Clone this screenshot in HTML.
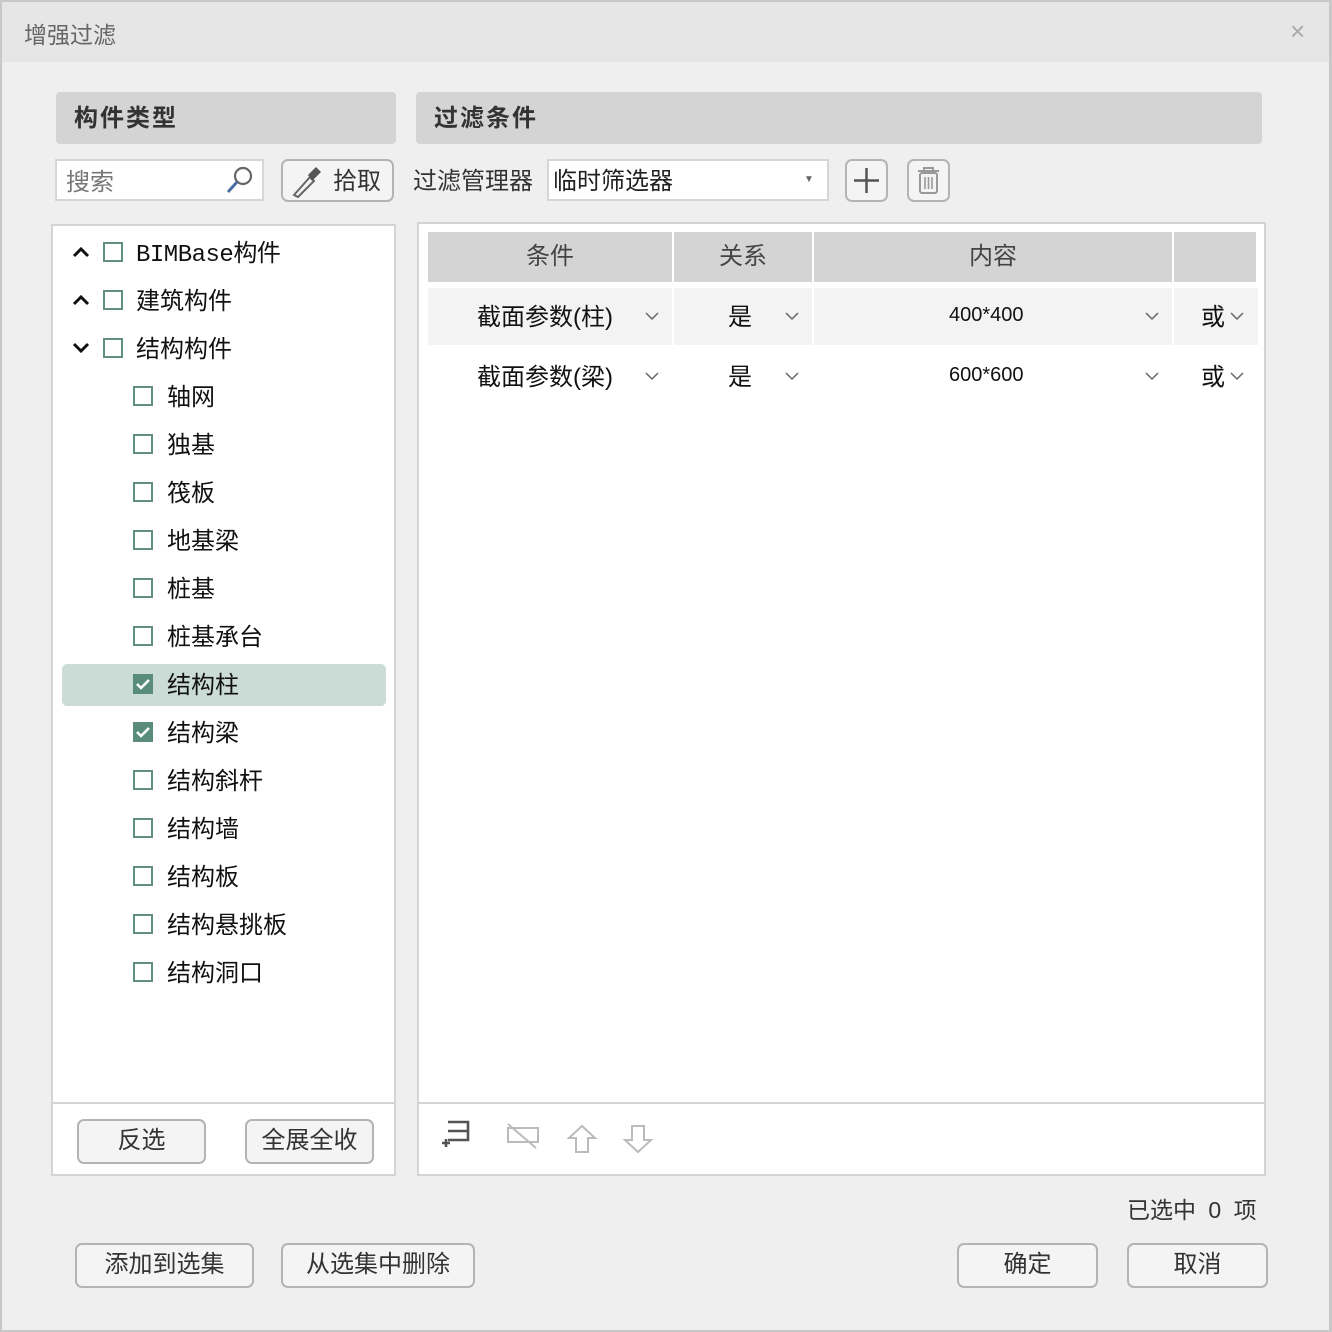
<!DOCTYPE html>
<html><head><meta charset="utf-8"><style>
*{margin:0;padding:0;box-sizing:border-box}
body{width:1332px;height:1332px;background:#efefef;font-family:"Liberation Sans","Noto Sans CJK SC",sans-serif;position:relative;overflow:hidden;color:#111}
.a{position:absolute}
.frame{left:0;top:0;width:1332px;height:1332px;border:2px solid #c8c8c8;border-right-width:3px}
.title{left:2px;top:2px;width:1327px;height:60px;background:#e6e6e6}
.hdr{background:#d4d4d4;border-radius:4px;font-weight:bold;font-size:24px;color:#333;line-height:54px;padding-left:18px;letter-spacing:2px}
.btn{border:2px solid #b4b4b4;border-radius:7px;background:#f4f4f4;font-size:24px;color:#333;text-align:center}
.txt{font-size:24px;white-space:nowrap}
.cb{width:20px;height:20px;border:2px solid #5e8f80;background:#fff}
.th{background:#d4d4d4;height:50px;font-size:24px;color:#444;text-align:center;line-height:50px}
</style></head><body>
<div class="a title"></div>
<div class="a" style="left:24px;top:16px;font-size:23px;color:#666">增强过滤</div>
<div class="a" style="left:1290px;top:17px;font-size:26px;color:#aaa;line-height:28px">×</div>

<div class="a hdr" style="left:56px;top:92px;width:340px;height:52px">构件类型</div>
<div class="a hdr" style="left:416px;top:92px;width:846px;height:52px">过滤条件</div>

<div class="a" style="left:55px;top:159px;width:209px;height:42px;background:#fff;border:2px solid #d6d6d6"></div>
<div class="a txt" style="left:66px;top:162px;color:#777">搜索</div>
<svg class="a" style="left:224px;top:164px" width="32" height="32" viewBox="0 0 32 32"><circle cx="19" cy="12" r="8" fill="none" stroke="#666" stroke-width="2.2"/><line x1="13" y1="18" x2="4" y2="28" stroke="#4a6fa5" stroke-width="3"/></svg>
<div class="a btn" style="left:281px;top:159px;width:113px;height:43px"></div>
<svg class="a" style="left:288px;top:163px" width="36" height="36" viewBox="0 0 36 36"><path d="M6 32 L22 14 L26 18 L10 34 Z" fill="none" stroke="#666" stroke-width="2"/><path d="M20 12 L28 4 L33 9 L24 18 Z" fill="#555"/></svg>
<div class="a txt" style="left:333px;top:161px;color:#333">拾取</div>

<div class="a txt" style="left:413px;top:161px;color:#333">过滤管理器</div>
<div class="a" style="left:547px;top:159px;width:282px;height:42px;background:#fff;border:2px solid #d6d6d6"></div>
<div class="a txt" style="left:553px;top:161px;color:#222">临时筛选器</div>
<div class="a" style="left:804px;top:174px;font-size:10px;color:#666">▼</div>
<div class="a btn" style="left:845px;top:159px;width:43px;height:43px"></div>
<svg class="a" style="left:845px;top:159px" width="43" height="43"><path d="M21.5 9v25M9 21.5h25" stroke="#555" stroke-width="2.5"/></svg>
<div class="a btn" style="left:907px;top:159px;width:43px;height:43px"></div>
<svg class="a" style="left:907px;top:159px" width="43" height="43"><path d="M11 12h21M17 12v-3h9v3" fill="none" stroke="#999" stroke-width="2"/><rect x="13" y="14" width="17" height="20" rx="2" fill="none" stroke="#999" stroke-width="2"/><path d="M18 18v12M21.5 18v12M25 18v12" stroke="#999" stroke-width="1.6"/></svg>

<div class="a" style="left:51px;top:224px;width:345px;height:952px;background:#fff;border:2px solid #d4d4d4"></div>
<div class="a" style="left:53px;top:1102px;width:341px;height:2px;background:#d4d4d4"></div>
<div class="a" style="left:62px;top:664px;width:324px;height:42px;background:#cbdcd6;border-radius:5px"></div>

<svg class="a" style="left:71px;top:244px" width="20" height="16"><path d="M3 12l7-7 7 7" fill="none" stroke="#111" stroke-width="3"/></svg>
<div class="a cb" style="left:103px;top:242px"></div>
<div class="a txt" style="left:136px;top:233px;font-family:'Liberation Mono','Noto Sans CJK SC',monospace;letter-spacing:-0.5px">BIMBase构件</div>
<svg class="a" style="left:71px;top:292px" width="20" height="16"><path d="M3 12l7-7 7 7" fill="none" stroke="#111" stroke-width="3"/></svg>
<div class="a cb" style="left:103px;top:290px"></div>
<div class="a txt" style="left:136px;top:281px">建筑构件</div>
<svg class="a" style="left:71px;top:340px" width="20" height="16"><path d="M3 4l7 7 7-7" fill="none" stroke="#111" stroke-width="3"/></svg>
<div class="a cb" style="left:103px;top:338px"></div>
<div class="a txt" style="left:136px;top:329px">结构构件</div>

<div class="a cb" style="left:133px;top:386px"></div><div class="a txt" style="left:167px;top:377px">轴网</div>
<div class="a cb" style="left:133px;top:434px"></div><div class="a txt" style="left:167px;top:425px">独基</div>
<div class="a cb" style="left:133px;top:482px"></div><div class="a txt" style="left:167px;top:473px">筏板</div>
<div class="a cb" style="left:133px;top:530px"></div><div class="a txt" style="left:167px;top:521px">地基梁</div>
<div class="a cb" style="left:133px;top:578px"></div><div class="a txt" style="left:167px;top:569px">桩基</div>
<div class="a cb" style="left:133px;top:626px"></div><div class="a txt" style="left:167px;top:617px">桩基承台</div>
<svg class="a" style="left:133px;top:674px" width="20" height="20"><rect width="20" height="20" fill="#5a8c7c"/><path d="M4 10l4 4 8-8" fill="none" stroke="#fff" stroke-width="2.5"/></svg><div class="a txt" style="left:167px;top:665px">结构柱</div>
<svg class="a" style="left:133px;top:722px" width="20" height="20"><rect width="20" height="20" fill="#5a8c7c"/><path d="M4 10l4 4 8-8" fill="none" stroke="#fff" stroke-width="2.5"/></svg><div class="a txt" style="left:167px;top:713px">结构梁</div>
<div class="a cb" style="left:133px;top:770px"></div><div class="a txt" style="left:167px;top:761px">结构斜杆</div>
<div class="a cb" style="left:133px;top:818px"></div><div class="a txt" style="left:167px;top:809px">结构墙</div>
<div class="a cb" style="left:133px;top:866px"></div><div class="a txt" style="left:167px;top:857px">结构板</div>
<div class="a cb" style="left:133px;top:914px"></div><div class="a txt" style="left:167px;top:905px">结构悬挑板</div>
<div class="a cb" style="left:133px;top:962px"></div><div class="a txt" style="left:167px;top:953px">结构洞口</div>

<div class="a btn" style="left:77px;top:1119px;width:129px;height:45px;line-height:39px">反选</div>
<div class="a btn" style="left:245px;top:1119px;width:129px;height:45px;line-height:39px">全展全收</div>

<div class="a" style="left:417px;top:222px;width:849px;height:954px;background:#fff;border:2px solid #d4d4d4"></div>
<div class="a" style="left:419px;top:1102px;width:845px;height:2px;background:#d4d4d4"></div>
<div class="a th" style="left:428px;top:232px;width:244px">条件</div>
<div class="a th" style="left:674px;top:232px;width:138px">关系</div>
<div class="a th" style="left:814px;top:232px;width:358px">内容</div>
<div class="a th" style="left:1174px;top:232px;width:82px"></div>
<div class="a" style="left:428px;top:288px;width:244px;height:57px;background:#f3f3f3"></div>
<div class="a" style="left:674px;top:288px;width:138px;height:57px;background:#f3f3f3"></div>
<div class="a" style="left:814px;top:288px;width:358px;height:57px;background:#f3f3f3"></div>
<div class="a" style="left:1174px;top:288px;width:84px;height:57px;background:#f3f3f3"></div>

<div class="a txt" style="left:477px;top:297px">截面参数(柱)</div>
<div class="a txt" style="left:728px;top:297px">是</div>
<div class="a" style="left:949px;top:304px;font-size:20px">400*400</div>
<div class="a txt" style="left:1201px;top:297px">或</div>
<div class="a txt" style="left:477px;top:357px">截面参数(梁)</div>
<div class="a txt" style="left:728px;top:357px">是</div>
<div class="a" style="left:949px;top:364px;font-size:20px">600*600</div>
<div class="a txt" style="left:1201px;top:357px">或</div>
<svg class="a" style="left:0;top:0" width="1332" height="420"><g fill="none" stroke="#666" stroke-width="1.5">
<path d="M646 313l6 6 6-6M786 313l6 6 6-6M1146 313l6 6 6-6M1231 313l6 6 6-6"/>
<path d="M646 373l6 6 6-6M786 373l6 6 6-6M1146 373l6 6 6-6M1231 373l6 6 6-6"/></g></svg>

<svg class="a" style="left:436px;top:1116px" width="230" height="46" viewBox="0 0 230 46">
<path d="M12 6h20v18h-20M12 15h20" fill="none" stroke="#555" stroke-width="2.6"/><path d="M6 27h8M10 23v8" stroke="#555" stroke-width="2.6"/>
<path d="M72 12h30v14h-30z" fill="none" stroke="#bbb" stroke-width="2"/><path d="M72 8l28 24" stroke="#bbb" stroke-width="2"/>
<path d="M146 10l-13 12h7v14h12v-14h7z" fill="none" stroke="#bbb" stroke-width="2"/>
<path d="M202 36l-13-12h7v-14h12v14h7z" fill="none" stroke="#bbb" stroke-width="2"/>
</svg>

<div class="a" style="left:1127px;top:1191px;font-size:23px;color:#333;white-space:nowrap;word-spacing:6px">已选中 0 项</div>
<div class="a btn" style="left:75px;top:1243px;width:179px;height:45px;line-height:39px">添加到选集</div>
<div class="a btn" style="left:281px;top:1243px;width:194px;height:45px;line-height:39px">从选集中删除</div>
<div class="a btn" style="left:957px;top:1243px;width:141px;height:45px;line-height:39px">确定</div>
<div class="a btn" style="left:1127px;top:1243px;width:141px;height:45px;line-height:39px">取消</div>
<div class="a frame"></div>
</body></html>
